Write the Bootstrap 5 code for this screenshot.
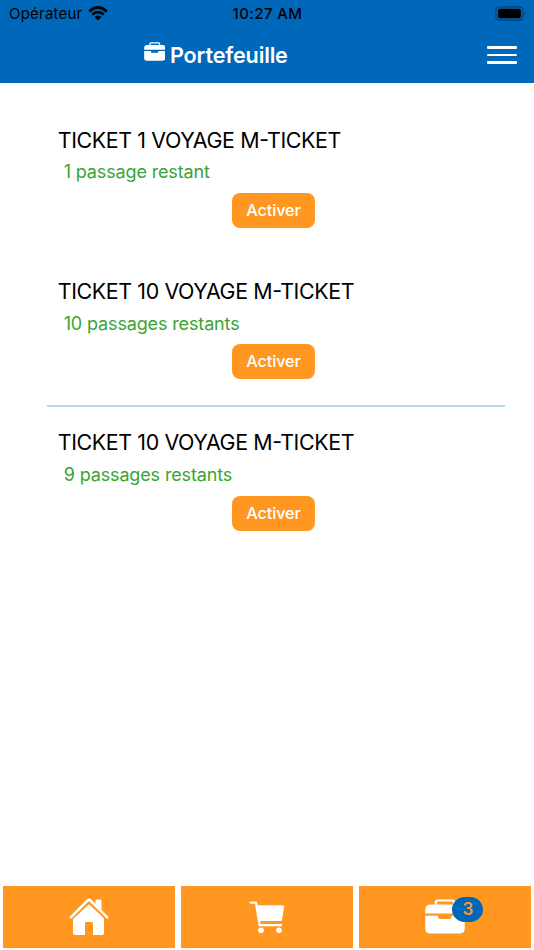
<!DOCTYPE html>
<html lang="fr">
<head>
<meta charset="utf-8">
<meta name="viewport" content="width=device-width, initial-scale=1">
<title>Portefeuille</title>
<link href="https://cdn.jsdelivr.net/npm/bootstrap@5.3.0/dist/css/bootstrap.min.css" rel="stylesheet">
<style>
  body { font-family: Inter, "Liberation Sans", sans-serif; height: 950px; color: #000; }
  svg { display: block; flex-shrink: 0; }
  .top-area { background: #0068bb; height: 82.7px; }
  .status-line { height: 28px; display: grid; grid-template-columns: 1fr auto 1fr; padding: 0 8px 0 9px; font-size: 15px; line-height: 28px; }
  .carrier { letter-spacing: .22px; gap: 6px; }
  .carrier svg { margin-top: -2px; }
  .battery { margin-top: -1px; }
  .clock { font-weight: 500; letter-spacing: .4px; }
  .title-line { height: 54px; padding: 0 17px 0 143.5px; }
  .page-title { font-size: 21.6px; font-weight: 600; line-height: 28px; letter-spacing: -.16px; gap: 5px; }
  .page-title span { margin-top: -1px; }
  .menu-btn { width: 30px; height: 20px; gap: 5.2px; }
  .menu-btn span { height: 2.4px; background: #fff; border-radius: 1px; }
  .tickets { padding: 21.3px 28.7px 0 46.7px; }
  .ticket { height: 151.35px; padding: 22px 11px 0; }
  .ticket.separated { border-top: 2px solid #b9d8ec; margin-top: -2px; height: 152.35px; padding-top: 21.7px; }
  .ticket-name { font-size: 21.4px; line-height: 28px; font-weight: 400; letter-spacing: -.37px; font-feature-settings: "case"; white-space: nowrap; }
  .ticket-left { font-size: 18px; line-height: 24px; letter-spacing: -.14px; color: #3aa435; margin: 6.4px 0 8.6px 6px; }
  .separated .ticket-left { margin-bottom: 9.4px; }
  .activate { width: 83px; height: 35px; padding: 0; margin-left: 174.3px; background: #ff9721; color: #fff; border-radius: 8px; font-size: 16.3px; font-weight: 500; letter-spacing: -.15px; line-height: 35px; border: 0; display: block; }
  .tabs { gap: 5.6px; padding: 0 3px 2.4px; }
  .tab { background: #ff9721; height: 62px; flex: 1 1 0; }
  .count { position: absolute; left: 27.5px; top: -2px; width: 31px; height: 25px; background: #0068bb; color: #ff9721; font-size: 17px; font-weight: 600; line-height: 25px; }
</style>
</head>
<body class="d-flex flex-column overflow-hidden bg-white">
<svg width="0" height="0" class="position-absolute" aria-hidden="true">
  <symbol id="case" viewBox="0 0 40 35">
    <path d="M10.8 6V3.5Q10.8 1.5 13 1.5H27Q29.2 1.5 29.2 3.5V6" fill="none" stroke="#fff" stroke-width="2.2"/>
    <path d="M.3 14.4V10.4Q.5 5.4 6 5.4H34Q39.5 5.4 39.7 10.4V14.4Z" fill="#fff"/>
    <path d="M.3 16.8H13V17.8Q13 20 15.2 20H24.3Q26.5 20 26.5 17.8V16.8H39.7V29.5Q39.7 34.4 35 34.4H5Q.3 34.4 .3 29.5Z" fill="#fff"/>
  </symbol>
</svg>

<header class="top-area flex-shrink-0">
  <div class="status-line">
    <div class="carrier d-flex align-items-center">
      <span>Opérateur</span>
      <svg width="20" height="15" viewBox="0 0 20 15">
        <path d="M1.2 5.4Q10-2.5 18.8 5.4M4.3 8.6Q10 3.5 15.7 8.6" fill="none" stroke="#000" stroke-width="2.7"/>
        <path d="M6.5 11.1Q10 8 13.5 11.1L10 14.6Z"/>
      </svg>
    </div>
    <div class="clock">10:27 AM</div>
    <div class="d-flex align-items-center justify-content-end">
      <svg class="battery" width="31" height="16" viewBox="0 0 31 16">
        <rect x=".9" y=".9" width="27" height="13.2" rx="3.8" fill="none" stroke="#00427a" stroke-width="1.3"/>
        <rect x="2.9" y="2.7" width="23" height="9.6" rx="2"/>
        <path d="M29.6 5.2Q31.4 7.5 29.6 9.8Z" fill="#00427a"/>
      </svg>
    </div>
  </div>
  <div class="title-line d-flex align-items-center justify-content-between">
    <h1 class="page-title d-flex text-white m-0">
      <svg width="21.5" height="19" viewBox="0 0 40 35" preserveAspectRatio="none"><use href="#case" width="40" height="35"/></svg>
      <span>Portefeuille</span>
    </h1>
    <button class="menu-btn d-flex flex-column justify-content-center border-0 bg-transparent p-0" type="button" aria-label="Menu">
      <span class="w-100"></span><span class="w-100"></span><span class="w-100"></span>
    </button>
  </div>
</header>

<main class="tickets flex-grow-1">
  <section class="ticket">
    <h2 class="ticket-name m-0">TICKET 1 VOYAGE M-TICKET</h2>
    <p class="ticket-left">1 passage restant</p>
    <button class="btn activate" type="button">Activer</button>
  </section>
  <section class="ticket">
    <h2 class="ticket-name m-0">TICKET 10 VOYAGE M-TICKET</h2>
    <p class="ticket-left">10 passages restants</p>
    <button class="btn activate" type="button">Activer</button>
  </section>
  <section class="ticket separated">
    <h2 class="ticket-name m-0">TICKET 10 VOYAGE M-TICKET</h2>
    <p class="ticket-left">9 passages restants</p>
    <button class="btn activate" type="button">Activer</button>
  </section>
</main>

<nav class="tabs d-flex">
  <a class="tab d-flex align-items-center justify-content-center" href="#" aria-label="Accueil">
    <svg width="40" height="38" viewBox="0 0 40 38">
      <path d="M26.5 7V2.3Q26.5 1.5 27.3 1.5H31.7Q32.5 1.5 32.5 2.3V13ZM20 6.3L35 20.3V34.5Q35 37 32.5 37H24V25.2Q24 24 22.8 24H17.2Q16 24 16 25.2V37H6.5Q4 37 4 34.5V21Z" fill="#fff"/>
      <path d="M1.8 19.3L18.6 2.5Q20 1.2 21.4 2.5L38.2 19.3" fill="none" stroke="#fff" stroke-width="2.5" stroke-linecap="round"/>
      <path d="M3.6 20.6L20 4.8L36.4 20.6" fill="none" stroke="#ff9721" stroke-width="1"/>
    </svg>
  </a>
  <a class="tab d-flex align-items-center justify-content-center" href="#" aria-label="Panier">
    <svg width="36" height="34" viewBox="0 0 36 34">
      <path d="M1.6 2.6H7L10.6 25.2H32" fill="none" stroke="#fff" stroke-width="2.3" stroke-linecap="round" stroke-linejoin="round"/>
      <path d="M8 5.2H34Q35.4 5.2 35.2 6.7L33 19.7Q32.7 21 31.4 21H10.6Z" fill="#fff"/>
      <circle cx="12" cy="30.2" r="2.8" fill="#fff"/><circle cx="30" cy="30.2" r="2.8" fill="#fff"/>
    </svg>
  </a>
  <a class="tab d-flex align-items-center justify-content-center text-decoration-none" href="#" aria-label="Portefeuille">
    <span class="position-relative">
      <svg width="40" height="35"><use href="#case" width="40" height="35"/></svg>
      <span class="count rounded-pill text-center">3</span>
    </span>
  </a>
</nav>
<script src="https://cdn.jsdelivr.net/npm/bootstrap@5.3.0/dist/js/bootstrap.bundle.min.js"></script>
</body>
</html>
